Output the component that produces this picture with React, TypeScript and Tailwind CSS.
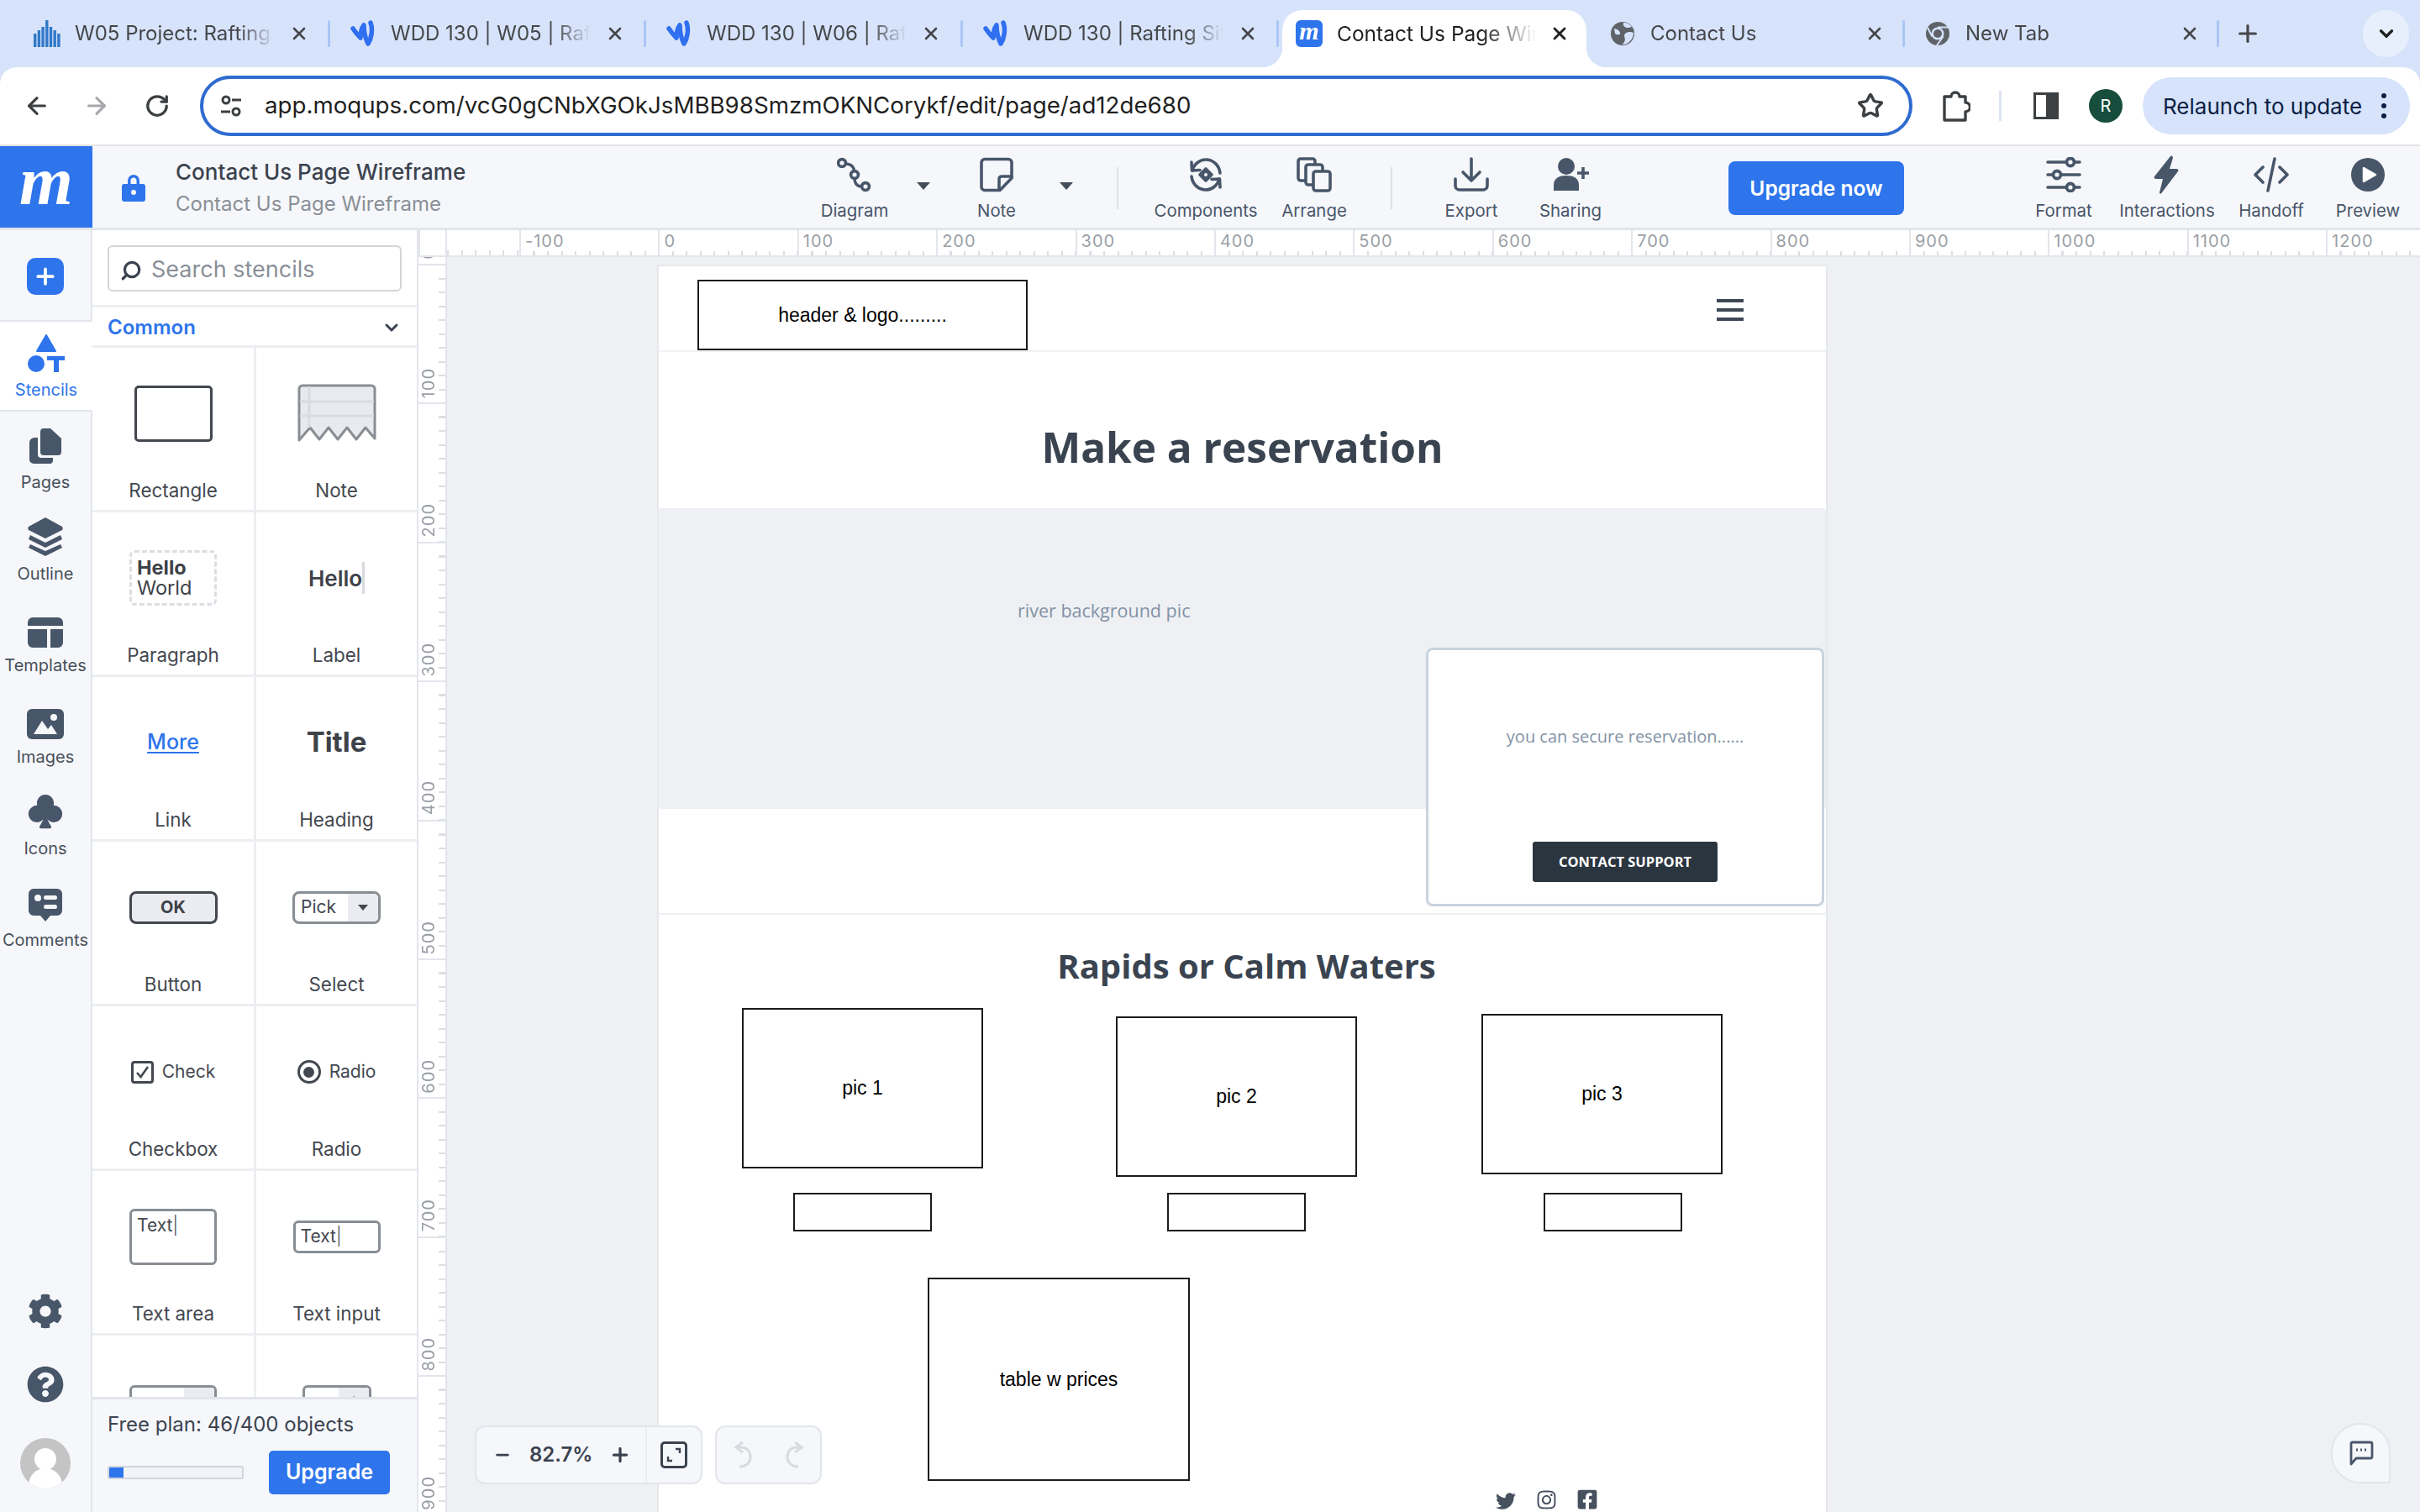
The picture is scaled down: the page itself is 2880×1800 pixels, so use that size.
import React from 'react';
import { ArrowLeft, ArrowRight, RotateCw, Star, Plus, X, ChevronDown, Search, Minus } from 'lucide-react';
import { BsSuitClubFill } from 'react-icons/bs';
import { FaCog, FaFacebookSquare, FaInstagram, FaQuestionCircle, FaTwitter } from 'react-icons/fa';

const SLATE = '#48566a';
const BLUE = '#2e75ec';

// browser tab favicons
const BarsIcon = () => (
  <svg width="32" height="32" viewBox="0 0 32 32" fill="#3179c8">
    <rect x="0" y="16" width="3.4" height="16" />
    <rect x="4.7" y="12" width="3.4" height="20" />
    <rect x="9.4" y="8" width="3.4" height="24" />
    <rect x="14.1" y="0" width="3.4" height="32" />
    <rect x="18.8" y="8" width="3.4" height="24" />
    <rect x="23.5" y="12" width="3.4" height="20" />
    <rect x="28.2" y="16" width="3.4" height="16" />
  </svg>
);

const SwirlIcon = () => (
  <svg width="30" height="32" viewBox="0 0 30 32" fill="none" stroke="#2f6ff0" strokeWidth="5.5" strokeLinecap="round" strokeLinejoin="round">
    <path d="M3 10 C5 13 9 18 12 21 C12 15 13 10 16 6 C16 14 18 22 21 28 C25 22 27 11 24 3" />
  </svg>
);

const MoqupsTile = () => (
  <div className="flex h-8 w-8 items-center justify-center rounded-[6px] bg-[#2e75ec] font-['Liberation_Serif',serif] text-[30px] leading-none font-bold text-white italic">
    <span className="-mt-1.5">m</span>
  </div>
);

const GlobeIcon = () => (
  <svg width="30" height="30" viewBox="0 0 30 30">
    <circle cx="15" cy="15" r="14" fill="#5f6368" />
    <path d="M5 9 C9 10 11 11 12 14 C13 17 8 17 6 15 Z M16 2 C15 6 18 8 22 8 L26 7 C23 3 20 2 16 2 Z M28 14 C24 12 18 13 17 17 C17 20 19 21 17 25 C16 27 14 28 14 28 C21 29 28 22 28 14 Z" fill="#d6e3fb" />
  </svg>
);

const ChromeIcon = () => (
  <svg width="30" height="32" viewBox="0 0 30 30">
    <circle cx="15" cy="15" r="14" fill="#5f6368" />
    <circle cx="15" cy="15" r="7.5" fill="#d6e3fb" />
    <circle cx="15" cy="15" r="5" fill="#5f6368" />
    <path d="M15 7.5 H28 M8.5 18.5 L3 8 M21.5 18.5 L14 29" stroke="#d6e3fb" strokeWidth="2" />
  </svg>
);

const TuneIcon = () => (
  <svg width="26" height="28" viewBox="0 0 26 28" fill="none" stroke="#3c4043" strokeWidth="3">
    <circle cx="7" cy="7" r="4" />
    <path d="M14 7 H25 M1 21 H12" />
    <circle cx="19" cy="21" r="4" />
  </svg>
);

const ExtensionIcon = () => (
  <svg width="34" height="40" viewBox="0 0 34 40" fill="none" stroke="#3c4043" strokeWidth="3.4" strokeLinejoin="round">
    <path d="M3 9 H11 A5 5 0 0 1 21 9 H28 V16 A5.5 5.5 0 0 1 28 27 V37 H3 Z" />
  </svg>
);

// moqups top toolbar icons, 40 box
const IconBox = ({ children }: { children: React.ReactNode }) => (
  <svg width="42" height="42" viewBox="0 0 42 42" fill="none" stroke={SLATE} strokeWidth="3.6" strokeLinecap="round" strokeLinejoin="round">
    {children}
  </svg>
);

const DiagramIcon = () => (
  <IconBox>
    <circle cx="6" cy="7" r="4.4" />
    <circle cx="21" cy="21" r="4.4" />
    <circle cx="34" cy="35" r="4.4" />
    <path d="M10.5 8 C16 8 20 11 20.5 16.5 M21 25.5 C21 31 24 35 29.5 35" />
  </IconBox>
);

const NoteIcon = () => (
  <IconBox>
    <path d="M7 2.5 H35 A4 4 0 0 1 39 6.5 V25 L25 39.5 H7 A4 4 0 0 1 3 35.5 V6.5 A4 4 0 0 1 7 2.5 Z" />
    <path d="M24 39 V26 A3 3 0 0 1 27 23 H39" />
  </IconBox>
);

const ComponentsIcon = () => (
  <IconBox>
    <path d="M5 16 C7 8 14 3 21 3 C30 3 37 10 38 19" />
    <path d="M37 26 C35 34 28 39 21 39 C12 39 5 32 4 23" />
    <path d="M4 6 L4.5 16 L14 15.5 M38 36 L37.5 26 L28 26.5" />
    <path d="M21 14 L28 21 L21 28 L14 21 Z" fill={SLATE} />
    <circle cx="21" cy="21" r="2" fill="#f6f7fa" stroke="none" />
  </IconBox>
);

const ArrangeIcon = () => (
  <IconBox>
    <rect x="2" y="2" width="20" height="26" rx="3" />
    <rect x="11" y="9" width="20" height="24" rx="3" fill="#f6f7fa" />
    <rect x="20" y="17" width="20" height="23" rx="3" fill="#f6f7fa" />
  </IconBox>
);

const ExportIcon = () => (
  <IconBox>
    <path d="M21 2 V27 M11 18 L21 28 L31 18 M2 26 V34 A5 5 0 0 0 7 39 H35 A5 5 0 0 0 40 34 V26" />
  </IconBox>
);

const SharingIcon = () => (
  <svg width="44" height="42" viewBox="0 0 44 42" fill={SLATE}>
    <circle cx="17" cy="11" r="10" />
    <path d="M2 40 V33 C2 25 9 22 17 22 C25 22 32 25 32 33 V40 Z" />
    <path d="M37 12 V26 M30 19 H44" stroke={SLATE} strokeWidth="3.6" />
  </svg>
);

const FormatIcon = () => (
  <IconBox>
    <path d="M2 6 H40 M2 21 H40 M2 36 H40" />
    <circle cx="29" cy="6" r="4.5" fill="#f6f7fa" strokeWidth="3.8" />
    <circle cx="13" cy="21" r="4.5" fill="#f6f7fa" strokeWidth="3.8" />
    <circle cx="29" cy="36" r="4.5" fill="#f6f7fa" strokeWidth="3.8" />
  </IconBox>
);

const BoltIcon = () => (
  <svg width="42" height="46" viewBox="0 0 42 46" fill={SLATE}>
    <path d="M25 1 L6 25 C5 27 6 28 8 28 H16 L12 44 C12 46 14 46 15 44 L34 19 C35 17 34 16 32 16 H24 L28 3 C28 0 26 0 25 1 Z" />
  </svg>
);

const CodeIcon = () => (
  <IconBox>
    <path d="M11 12 L2 21 L11 30 M31 12 L40 21 L31 30 M25 2 L17 40" />
  </IconBox>
);

const PlayCircle = () => (
  <svg width="42" height="42" viewBox="0 0 42 42">
    <circle cx="21" cy="21" r="20" fill={SLATE} />
    <path d="M16 13 L30 21 L16 29 Z" fill="#fff" stroke="#fff" strokeWidth="2.5" strokeLinejoin="round" />
  </svg>
);

// left rail icons
const StencilsIcon = () => (
  <svg width="46" height="46" viewBox="0 0 46 46" fill={BLUE}>
    <path d="M23 1 L34 20 H12 Z" stroke={BLUE} strokeWidth="2" strokeLinejoin="round" />
    <circle cx="11" cy="35" r="10" />
    <path d="M24 26 H45 V31 H38 V45 H32 V31 H24 Z" />
  </svg>
);

const PagesIcon = () => (
  <svg width="40" height="44" viewBox="0 0 40 44" fill={SLATE}>
    <path d="M7 12 H11 V32 A4 4 0 0 0 15 36 H29 V39 A4 4 0 0 1 25 43 H6 A5 5 0 0 1 1 38 V18 A6 6 0 0 1 7 12 Z" />
    <path d="M18 1 H26 L39 13 V29 A4 4 0 0 1 35 33 H18 A4 4 0 0 1 14 29 V5 A4 4 0 0 1 18 1 Z" />
  </svg>
);

const OutlineIcon = () => (
  <svg width="42" height="46" viewBox="0 0 42 46" fill={SLATE}>
    <path d="M21 0 L41 11 C42 12 42 14 41 15 L21 25 L1 15 C0 14 0 12 1 11 Z" />
    <path d="M3 21 L21 30 L39 21 L41 26 L21 36 L1 26 Z" />
    <path d="M3 32 L21 40 L39 32 L41 36 L21 46 L1 36 Z" />
  </svg>
);

const TemplatesIcon = () => (
  <svg width="42" height="36" viewBox="0 0 42 36" fill={SLATE}>
    <path d="M6 0 H36 A6 6 0 0 1 42 6 V10 H0 V6 A6 6 0 0 1 6 0 Z" />
    <path d="M0 14 H23 V36 H6 A6 6 0 0 1 0 30 Z" />
    <path d="M27 14 H42 V30 A6 6 0 0 1 36 36 H27 Z" />
  </svg>
);

const ImagesIcon = () => (
  <svg width="44" height="36" viewBox="0 0 44 36">
    <rect width="44" height="36" rx="6" fill={SLATE} />
    <circle cx="32" cy="10" r="4" fill="#f6f7fa" />
    <path d="M8 30 L18 14 L25 24 L29 19 L36 30 Z" fill="#f6f7fa" />
  </svg>
);

const CommentsIcon = () => (
  <svg width="40" height="40" viewBox="0 0 40 40">
    <path d="M6 0 H34 A6 6 0 0 1 40 6 V26 A6 6 0 0 1 34 32 H26 L20 39 L14 32 H6 A6 6 0 0 1 0 26 V6 A6 6 0 0 1 6 0 Z" fill={SLATE} />
    <circle cx="11" cy="11" r="4" fill="#f6f7fa" />
    <rect x="18" y="8" width="16" height="5" rx="2.5" fill="#f6f7fa" />
    <rect x="18" y="19" width="16" height="5" rx="2.5" fill="#f6f7fa" />
  </svg>
);

const NotePreview = () => (
  <svg width="96" height="70" viewBox="0 0 96 70">
    <path d="M3 6 A4 4 0 0 1 7 2 H89 A4 4 0 0 1 93 6 V65 L82 52 L71 66 L60 52 L49 66 L38 52 L27 66 L16 52 L3 67 Z" fill="#e9eaf0" stroke="#888e94" strokeWidth="3" strokeLinejoin="round" />
    <path d="M4 21 H92 M4 38 H92 M15 3 V52" stroke="#d9dbe1" strokeWidth="3" fill="none" />
  </svg>
);

const tabs = [
  { title: 'W05 Project: Rafting Site', icon: <BarsIcon />, width: 'w-[376px]' },
  { title: 'WDD 130 | W05 | Rafting', icon: <SwirlIcon />, width: 'w-[376px]' },
  { title: 'WDD 130 | W06 | Rafting', icon: <SwirlIcon />, width: 'w-[377px]' },
  { title: 'WDD 130 | Rafting Site', icon: <SwirlIcon />, width: 'w-[376px]' },
];

const BrowserTab = ({ title, icon, width, sep = true }: { title: string; icon: React.ReactNode; width: string; sep?: boolean }) => (
  <div className={`flex h-[80px] shrink-0 items-center pl-[23px] ${width}`}>
    <div className="flex w-8 justify-center">{icon}</div>
    <div className="ml-[17px] w-[238px] overflow-hidden text-[24px] whitespace-nowrap text-[#45474a] [mask-image:linear-gradient(to_right,black_82%,transparent_100%)]">
      {title}
    </div>
    <X className="ml-[17px] shrink-0 text-[#45474a]" size={24} strokeWidth={2.6} />
    {sep && <div className="ml-auto h-8 w-[3px] rounded-sm bg-[#aac5f5]" />}
  </div>
);

const TabStrip = () => (
  <div className="flex h-[80px] pl-[17px]">
    {tabs.map((t) => (
      <BrowserTab key={t.title} {...t} />
    ))}
    <div className="flex h-[80px] w-[370px] shrink-0 items-end pl-[4px]">
      <div className="relative flex h-[68px] w-[362px] items-center rounded-t-[24px] bg-white pb-[12px] pl-[16px] before:absolute before:bottom-0 before:-left-6 before:h-6 before:w-6 before:bg-[radial-gradient(circle_at_0_0,transparent_24px,white_24.5px)] after:absolute after:-right-6 after:bottom-0 after:h-6 after:w-6 after:bg-[radial-gradient(circle_at_100%_0,transparent_24px,white_24.5px)]">
        <MoqupsTile />
        <div className="ml-[17px] w-[238px] overflow-hidden text-[24.5px] whitespace-nowrap text-[#1f1f1f] [mask-image:linear-gradient(to_right,black_72%,transparent_100%)]">
          Contact Us Page Wireframe
        </div>
        <X className="ml-[15px] shrink-0 text-[#1f1f1f]" size={24} strokeWidth={2.8} />
      </div>
    </div>
    <BrowserTab title="Contact Us" icon={<GlobeIcon />} width="w-[375px]" />
    <BrowserTab title="New Tab" icon={<ChromeIcon />} width="w-[374px]" />
    <Plus className="mt-[24px] ml-[18px] text-[#45474a]" size={32} strokeWidth={2.4} />
    <div className="mt-[12px] ml-[121px] flex h-[56px] w-[55px] items-center justify-center rounded-full bg-[#e8effc]">
      <ChevronDown className="text-[#1f1f1f]" size={26} strokeWidth={3} />
    </div>
  </div>
);

const AddressBar = () => (
  <div className="flex h-[92px] items-center rounded-t-[20px] bg-white">
    <ArrowLeft className="ml-[28px] text-[#3c4043]" size={32} strokeWidth={2.4} />
    <ArrowRight className="ml-[39px] text-[#a6a8ab]" size={32} strokeWidth={2.4} />
    <RotateCw className="ml-[41px] text-[#3c4043]" size={30} strokeWidth={2.6} />
    <div className="ml-[36px] flex h-[72px] w-[2038px] items-center rounded-full border-4 border-[#2f6bd0] pr-[30px] pl-[20px]">
      <TuneIcon />
      <span className="ml-[27px] font-['Inter',sans-serif] text-[27.7px] text-[#1f1f1f]">app.moqups.com/vcG0gCNbXGOkJsMBB98SmzmOKNCorykf/edit/page/ad12de680</span>
      <Star className="ml-auto text-[#3c4043]" size={32} strokeWidth={2.6} />
    </div>
    <div className="ml-[35px] flex shrink-0"><ExtensionIcon /></div>
    <div className="ml-[34px] h-9 w-[3px] bg-[#dde4f2]" />
    <div className="ml-[38px] flex h-[32px] w-[30px] border-[3px] border-[#3c4043]">
      <div className="ml-auto h-full w-[12px] bg-[#3c4043]" />
    </div>
    <div className="ml-[36px] flex h-10 w-10 items-center justify-center rounded-full bg-[#174d3c] text-[20px] text-white">R</div>
    <div className="ml-[24px] flex h-[68px] w-[318px] items-center rounded-full bg-[#d6e3fb] pr-[28px] pl-[24px]">
      <span className="text-[26px] whitespace-nowrap text-[#0b1f44]">Relaunch to update</span>
      <div className="ml-auto flex flex-col gap-[6px]">
        <div className="h-[6px] w-[6px] rounded-full bg-[#0b1f44]" />
        <div className="h-[6px] w-[6px] rounded-full bg-[#0b1f44]" />
        <div className="h-[6px] w-[6px] rounded-full bg-[#0b1f44]" />
      </div>
    </div>
  </div>
);

const ToolItem = ({ label, width, children }: { label: string; width: string; children: React.ReactNode }) => (
  <div className={`flex shrink-0 flex-col items-center ${width}`}>
    <div className="flex h-[42px] items-center justify-center">{children}</div>
    <div className="mt-[7px] text-[20.4px] leading-[30px] whitespace-nowrap text-[#48566a]">{label}</div>
  </div>
);

const Caret = ({ width }: { width: string }) => (
  <div className={`flex shrink-0 justify-center ${width}`}>
    <div className="h-0 w-0 border-x-[8px] border-t-[9px] border-x-transparent border-t-[#434c5a]" />
  </div>
);

const AppHeader = () => (
  <div className="flex h-[102px] border-t-2 border-b-[3px] border-t-[#e3e3e3] border-b-[#e3e5ec] bg-[#f6f7fa]">
    <div className="flex w-[110px] shrink-0 items-center justify-center bg-[#2e75ec] font-['Liberation_Serif',serif] text-[82px] leading-none font-bold text-white italic">
      <span className="-mt-[14px]">m</span>
    </div>
    <div className="flex w-[850px] shrink-0 items-center">
      <svg className="ml-[35px]" width="28" height="34" viewBox="0 0 28 34" fill="#2e75ec">
        <path d="M7 14 V9 A7 7 0 0 1 21 9 V14 H17.5 V9 A3.5 3.5 0 0 0 10.5 9 V14 Z" />
        <rect y="13" width="28" height="21" rx="3" />
        <circle cx="14" cy="23" r="3" fill="#f6f7fa" />
      </svg>
      <div className="mt-[3px] ml-[36px]">
        <div className="text-[26px] leading-[32px] font-medium text-[#3b4350]">Contact Us Page Wireframe</div>
        <div className="mt-[6px] text-[24px] leading-[32px] text-[#8a8f98]">Contact Us Page Wireframe</div>
      </div>
    </div>
    <div className="flex items-start pt-[13px]">
      <ToolItem label="Diagram" width="w-[114px]"><DiagramIcon /></ToolItem>
      <div className="pt-[30px]"><Caret width="w-[50px]" /></div>
      <ToolItem label="Note" width="w-[124px]"><NoteIcon /></ToolItem>
      <div className="pt-[30px]"><Caret width="w-[42px]" /></div>
      <div className="flex h-[50px] w-[80px] shrink-0 justify-center pt-[12px]"><div className="h-[50px] w-[2px] bg-[#dfe1e7]" /></div>
      <ToolItem label="Components" width="w-[130px]"><ComponentsIcon /></ToolItem>
      <ToolItem label="Arrange" width="w-[128px]"><ArrangeIcon /></ToolItem>
      <div className="flex h-[50px] w-[56px] shrink-0 justify-center pt-[12px]"><div className="h-[50px] w-[2px] bg-[#dfe1e7]" /></div>
      <ToolItem label="Export" width="w-[134px]"><ExportIcon /></ToolItem>
      <ToolItem label="Sharing" width="w-[102px]"><SharingIcon /></ToolItem>
      <div className="mt-[5px] ml-[137px] flex h-[64px] w-[209px] shrink-0 items-center justify-center rounded-[8px] bg-[#2e75ec] text-[24.5px] font-semibold text-white">Upgrade now</div>
      <div className="ml-[130px] flex">
        <ToolItem label="Format" width="w-[120px]"><FormatIcon /></ToolItem>
        <ToolItem label="Interactions" width="w-[126px]"><BoltIcon /></ToolItem>
        <ToolItem label="Handoff" width="w-[122px]"><CodeIcon /></ToolItem>
        <ToolItem label="Preview" width="w-[108px]"><PlayCircle /></ToolItem>
      </div>
    </div>
  </div>
);

const railItems = [
  { label: 'Pages', icon: <PagesIcon /> },
  { label: 'Outline', icon: <OutlineIcon /> },
  { label: 'Templates', icon: <TemplatesIcon /> },
  { label: 'Images', icon: <ImagesIcon /> },
  { label: 'Icons', icon: <BsSuitClubFill size={46} color={SLATE} /> },
  { label: 'Comments', icon: <CommentsIcon /> },
];

const LeftRail = () => (
  <div className="flex h-full w-[110px] shrink-0 flex-col border-r-[2px] border-[#e3e5ec] bg-[#f6f7fa]">
    <div className="flex h-[109px] shrink-0 items-start justify-center border-b-[2px] border-[#e3e5ec] pt-[33px]">
      <div className="flex h-[44px] w-[44px] items-center justify-center rounded-[10px] bg-[#2e75ec]">
        <Plus className="text-white" size={30} strokeWidth={3} />
      </div>
    </div>
    <div className="-mr-[2px] flex h-[107px] shrink-0 flex-col items-center justify-start border-b-[2px] border-[#e3e5ec] bg-white pt-[15px]">
      <StencilsIcon />
      <div className="mt-[6px] text-[20px] leading-[28px] text-[#2e75ec]">Stencils</div>
    </div>
    {railItems.map((item) => (
      <div key={item.label} className="flex h-[109px] shrink-0 flex-col items-center">
        <div className="flex h-[63px] w-full items-end justify-center">{item.icon}</div>
        <div className="mt-[7px] text-[20px] leading-[28px] whitespace-nowrap text-[#48505c]">{item.label}</div>
      </div>
    ))}
    <div className="mt-auto flex flex-col items-center pb-[28px]">
      <FaCog size={42} color={SLATE} />
      <FaQuestionCircle className="mt-[44px]" size={44} color={SLATE} />
      <div className="mt-[42px] flex h-[60px] w-[60px] items-end justify-center overflow-hidden rounded-full bg-[#c4c4c4]">
        <div className="flex flex-col items-center">
          <div className="h-[26px] w-[26px] rounded-full bg-white" />
          <div className="-mt-[2px] h-[24px] w-[40px] rounded-t-full bg-white" />
        </div>
      </div>
    </div>
  </div>
);

const Cell = ({ label, children, right }: { label?: string; children: React.ReactNode; right?: boolean }) => (
  <div className={`flex h-[196px] flex-col border-b-[3px] border-[#eceef2] ${right ? '' : 'border-r-[3px]'}`}>
    <div className="flex h-[156px] shrink-0 items-center justify-center">{children}</div>
    {label && <div className="h-[28px] text-center text-[22.4px] leading-[28px] text-[#43474f]">{label}</div>}
  </div>
);

const Stencils = () => (
  <div className="flex h-full w-[388px] shrink-0 flex-col border-r-[2px] border-[#e3e5ec] bg-white">
    <div className="h-[92px] shrink-0 border-b-[3px] border-[#eceef2] px-[18px] pt-[18px]">
      <div className="flex h-[55px] items-center rounded-[6px] border-2 border-[#d2d5da] pt-[4px] pl-[13px]">
        <Search className="-scale-x-100 text-[#3b4350]" size={26} strokeWidth={3} />
        <span className="ml-[11px] text-[27px] text-[#8a8f98]">Search stencils</span>
      </div>
    </div>
    <div className="flex h-[48px] shrink-0 items-center justify-between border-b-[3px] border-[#eceef2] pt-[3px] pr-[18px] pl-[18px]">
      <span className="text-[24px] font-semibold text-[#2e75ec]">Common</span>
      <ChevronDown className="text-[#3b4350]" size={24} strokeWidth={3} />
    </div>
    <div className="grid min-h-0 flex-1 grid-cols-[195px_1fr] content-start overflow-hidden">
      <Cell label="Rectangle"><div className="h-[67px] w-[93px] rounded-[5px] border-[3.5px] border-[#43474f]" /></Cell>
      <Cell label="Note" right><NotePreview /></Cell>
      <Cell label="Paragraph">
        <div className="h-[66px] w-[104px] rounded-[6px] border-[3px] border-dashed border-[#dcdee3] pt-[6px] pl-[6px] text-[23.5px] leading-[24px] text-[#3e4249]">
          <div className="font-bold">Hello</div>
          <div>World</div>
        </div>
      </Cell>
      <Cell label="Label" right>
        <div className="flex items-center text-[26px] font-semibold text-[#3e4249]">
          Hello<div className="h-[38px] w-[3px] bg-[#d8dade]" />
        </div>
      </Cell>
      <Cell label="Link"><span className="text-[25px] font-medium text-[#2e75ec] underline underline-offset-[3px]">More</span></Cell>
      <Cell label="Heading" right><span className="text-[33px] font-bold text-[#3e4249]">Title</span></Cell>
      <Cell label="Button">
        <div className="flex h-[39px] w-[105px] items-center justify-center rounded-[8px] border-[3px] border-[#43474f] bg-[#ebecf1] text-[20px] font-bold text-[#3e4249]">OK</div>
      </Cell>
      <Cell label="Select" right>
        <div className="flex h-[39px] w-[105px] items-center overflow-hidden rounded-[8px] border-[3px] border-[#888e94] text-[21px] text-[#43474f]">
          <span className="flex-1 pl-[7px]">Pick</span>
          <div className="flex h-full w-[36px] items-center justify-center bg-[#ebecf1]">
            <div className="h-0 w-0 border-x-[6px] border-t-[7px] border-x-transparent border-t-[#43474f]" />
          </div>
        </div>
      </Cell>
      <Cell label="Checkbox">
        <div className="flex items-center gap-[10px] text-[21px] text-[#43474f]">
          <div className="flex h-[27px] w-[27px] items-center justify-center rounded-[4px] border-[3px] border-[#43474f]">
            <svg width="17" height="15" viewBox="0 0 17 15" fill="none" stroke="#43474f" strokeWidth="2.6"><path d="M2 8 L6.5 13 L15 1" /></svg>
          </div>
          Check
        </div>
      </Cell>
      <Cell label="Radio" right>
        <div className="flex items-center gap-[10px] text-[21px] text-[#43474f]">
          <div className="flex h-[28px] w-[28px] items-center justify-center rounded-full border-[3px] border-[#43474f]">
            <div className="h-[13px] w-[13px] rounded-full bg-[#43474f]" />
          </div>
          Radio
        </div>
      </Cell>
      <Cell label="Text area">
        <div className="h-[67px] w-[104px] rounded-[6px] border-[3px] border-[#888e94] pt-[3px] pl-[6px] text-[21px] leading-[28px] text-[#43474f]">Text<span className="font-light">|</span></div>
      </Cell>
      <Cell label="Text input" right>
        <div className="flex h-[39px] w-[104px] items-center rounded-[6px] border-[3px] border-[#888e94] pl-[6px] text-[21px] text-[#43474f]">Text<span className="font-light">|</span></div>
      </Cell>
      <Cell>
        <div className="flex h-[39px] w-[104px] items-start justify-between overflow-hidden rounded-[6px] border-[3px] border-[#888e94] text-[21px] leading-[28px] text-[#43474f]">
          <span className="pt-[6px] pl-[6px]">Sel</span>
          <div className="flex h-full w-[36px] justify-center bg-[#ebecf1] pt-[11px]"><div className="h-[8px] w-[18px] rounded-t-[2px] bg-[#43474f]" /></div>
        </div>
      </Cell>
      <Cell right>
        <div className="flex h-[39px] w-[82px] items-start justify-between overflow-hidden rounded-[6px] border-[3px] border-[#888e94] text-[21px] leading-[28px] text-[#43474f]">
          <span className="pt-[6px] pl-[6px]">0</span>
          <div className="flex h-full w-[36px] justify-center bg-[#ebecf1] pt-[10px]">
            <div className="h-0 w-0 border-x-[6px] border-b-[7px] border-x-transparent border-b-[#43474f]" />
          </div>
        </div>
      </Cell>
    </div>
    <div className="h-[137px] shrink-0 border-t-[3px] border-[#e3e5ec] bg-[#f6f7fa] pt-[15px] pr-[32px] pl-[18px]">
      <div className="text-[24px] leading-[30px] text-[#3b4350]">Free plan: 46/400 objects</div>
      <div className="mt-[16px] flex items-center justify-between">
        <div className="h-[16px] w-[162px] overflow-hidden rounded-[3px] border-2 border-[#d2d5dc] bg-[#f2f4f8]">
          <div className="h-full w-[17px] bg-[#2e75ec]" />
        </div>
        <div className="flex h-[52px] w-[144px] items-center justify-center rounded-[5px] bg-[#2e75ec] text-[25px] font-semibold text-white">Upgrade</div>
      </div>
    </div>
  </div>
);

const hMarks = ['-100', '0', '100', '200', '300', '400', '500', '600', '700', '800', '900', '1000', '1100', '1200'];
const vMarks = ['0', '100', '200', '300', '400', '500', '600', '700', '800', '900'];

const HRuler = () => (
  <div className="flex h-[32px] shrink-0 overflow-hidden border-b-[2px] border-[#e3e5ec] bg-white">
    <div className="h-full w-[34px] shrink-0 border-x-[2px] border-[#e3e5ec]" />
    <div className="flex h-full w-[86px] shrink-0 flex-col justify-end">
      <div className="h-[6px] bg-[repeating-linear-gradient(90deg,#dcdee3_0,#dcdee3_2px,transparent_2px,transparent_16.54px)]" />
    </div>
    {hMarks.map((m) => (
      <div key={m} className="flex h-full w-[165.4px] shrink-0 flex-col justify-between border-l-[2px] border-[#e3e5ec]">
        <span className="pt-[1px] pl-[5px] text-[20px] leading-[24px] tracking-[1px] text-[#9a9fa6]">{m}</span>
        <div className="h-[6px] bg-[repeating-linear-gradient(90deg,transparent_0,transparent_14.5px,#dcdee3_14.5px,#dcdee3_16.54px)]" />
      </div>
    ))}
  </div>
);

const VRuler = () => (
  <div className="h-full w-[34px] shrink-0 overflow-hidden border-r-[2px] border-[#e3e5ec] bg-white">
    <div className="-mt-[155.4px]">
      {vMarks.map((m) => (
        <div key={m} className="flex h-[165.4px] w-full items-stretch justify-between border-b-[2px] border-[#e3e5ec]">
          <div className="flex flex-1 items-end justify-center pb-[5px]">
            <span className="rotate-180 text-[20px] leading-[24px] tracking-[1px] text-[#9a9fa6] [writing-mode:vertical-rl]">{m}</span>
          </div>
          <div className="w-[8px] bg-[repeating-linear-gradient(180deg,transparent_0,transparent_14.5px,#dcdee3_14.5px,#dcdee3_16.54px)]" />
        </div>
      ))}
    </div>
  </div>
);

const Wire = ({ className, children }: { className: string; children?: React.ReactNode }) => (
  <div className={`absolute flex items-center justify-center border-2 border-[#1b1b1b] bg-white font-['Liberation_Sans',sans-serif] text-[23px] text-black ${className}`}>
    {children}
  </div>
);

// the wireframe on the canvas, things sit at their own canvas spots
const Page = () => (
  <div className="absolute top-[11px] left-[252px] h-[1600px] w-[1389px] bg-white font-['Open_Sans',sans-serif] outline-2 outline-[#e6e8ec]">
    <div className="absolute top-[100px] left-0 h-[2px] w-full bg-[#f0f1f3]" />
    <Wire className="top-[16px] left-[46px] h-[84px] w-[393px]">header &amp; logo.........</Wire>
    <div className="absolute top-[39px] left-[1259px] flex h-[26px] w-[32px] flex-col justify-between">
      <div className="h-1 bg-[#3e4854]" />
      <div className="h-1 bg-[#3e4854]" />
      <div className="h-1 bg-[#3e4854]" />
    </div>
    <div className="absolute top-[180px] left-0 w-full text-center text-[49.5px] leading-[70px] font-bold text-[#3a4450]">Make a reservation</div>
    <div className="absolute top-[288px] left-0 h-[358px] w-full rounded-[4px] bg-[#eef0f4]" />
    <div className="absolute top-[394px] left-[427px] text-[21.5px] leading-[32px] text-[#8292a5]">river background pic</div>
    <div className="absolute top-[454px] left-[913px] flex h-[308px] w-[474px] flex-col items-center rounded-[8px] border-[3px] border-[#c9d3de] bg-white pt-[88px]">
      <div className="text-[20px] leading-[30px] text-[#8292a5]">you can secure reservation......</div>
      <div className="mt-[110px] flex h-[48px] w-[220px] items-center justify-center rounded-[3px] bg-[#2b3540] text-[16.5px] font-bold text-white">CONTACT SUPPORT</div>
    </div>
    <div className="absolute top-[770px] left-0 h-[2px] w-full bg-[#f0f1f3]" />
    <div className="absolute top-[805px] left-[5px] w-full text-center text-[40px] leading-[56px] font-bold text-[#3a4450]">Rapids or Calm Waters</div>
    <Wire className="top-[883px] left-[99px] h-[191px] w-[287px]">pic 1</Wire>
    <Wire className="top-[893px] left-[544px] h-[191px] w-[287px]">pic 2</Wire>
    <Wire className="top-[890px] left-[979px] h-[191px] w-[287px]">pic 3</Wire>
    <Wire className="top-[1103px] left-[160px] h-[46px] w-[165px]" />
    <Wire className="top-[1103px] left-[605px] h-[46px] w-[165px]" />
    <Wire className="top-[1103px] left-[1053px] h-[46px] w-[165px]" />
    <Wire className="top-[1204px] left-[320px] h-[242px] w-[312px]">table w prices</Wire>
    <FaTwitter className="absolute top-[1458px] left-[996px]" size={24} color="#46505f" />
    <FaInstagram className="absolute top-[1456px] left-[1044px]" size={25} color="#46505f" />
    <FaFacebookSquare className="absolute top-[1455px] left-[1092px]" size={26} color="#46505f" />
  </div>
);

const Canvas = () => (
  <div className="relative h-full min-w-0 flex-1 overflow-hidden bg-[#eff0f4]">
    <Page />
    <div className="absolute bottom-[33px] left-[33px] flex h-[70px] w-[271px] items-center rounded-[12px] border-2 border-[#e3e5ec] bg-[#f6f7fa] text-[#3b4350]">
      <Minus className="ml-[20px]" size={22} strokeWidth={3} />
      <span className="ml-[21px] text-[24px] font-semibold">82.7%</span>
      <Plus className="ml-[20px]" size={26} strokeWidth={3} />
      <div className="ml-[17px] flex h-full items-center border-l-2 border-[#e9ebef] pl-[16px]">
        <div className="relative flex h-[32px] w-[32px] items-center justify-center rounded-[5px] border-[3px] border-[#3b4350]">
          <svg width="18" height="18" viewBox="0 0 18 18" fill="none" stroke="#3b4350" strokeWidth="2.4"><path d="M11 2 H16 V7 M7 16 H2 V11" /></svg>
        </div>
      </div>
    </div>
    <div className="absolute bottom-[33px] left-[319px] flex h-[70px] w-[127px] items-center justify-center gap-[38px] rounded-[12px] border-2 border-[#e3e5ec] bg-[#f6f7fa]">
      <svg width="26" height="32" viewBox="0 0 26 32" fill="none" stroke="#d8dbe0" strokeWidth="3.2"><path d="M14 1 L6 7 L14 13 M6 7 H12 C19 7 23 12 23 18 C23 25 18 30 10 30" /></svg>
      <svg width="26" height="32" viewBox="0 0 26 32" fill="none" stroke="#d8dbe0" strokeWidth="3.2"><path d="M12 1 L20 7 L12 13 M20 7 H14 C7 7 3 12 3 18 C3 25 8 30 16 30" /></svg>
    </div>
    <div className="absolute right-[35px] bottom-[34px] flex h-[72px] w-[71px] items-center justify-center rounded-[35px] rounded-br-[4px] border-2 border-[#e3e5ec] bg-[#f6f7fa]">
      <svg width="30" height="30" viewBox="0 0 30 30" fill="none" stroke={SLATE} strokeWidth="2.8" strokeLinejoin="round">
        <path d="M4 2 H26 A2 2 0 0 1 28 4 V19 A2 2 0 0 1 26 21 H9 L3 28 V3 Z" />
        <path d="M9 11 H11 M14 11 H16 M19 11 H21" strokeWidth="3" />
      </svg>
    </div>
  </div>
);

export default function App() {
  return (
    <div className="flex h-[1800px] w-[2880px] flex-col overflow-hidden bg-[#d6e3fb] font-['Inter',sans-serif]">
      <TabStrip />
      <AddressBar />
      <AppHeader />
      <div className="flex min-h-0 flex-1">
        <LeftRail />
        <Stencils />
        <div className="flex min-w-0 flex-1 flex-col">
          <HRuler />
          <div className="flex min-h-0 flex-1">
            <VRuler />
            <Canvas />
          </div>
        </div>
      </div>
    </div>
  );
}
